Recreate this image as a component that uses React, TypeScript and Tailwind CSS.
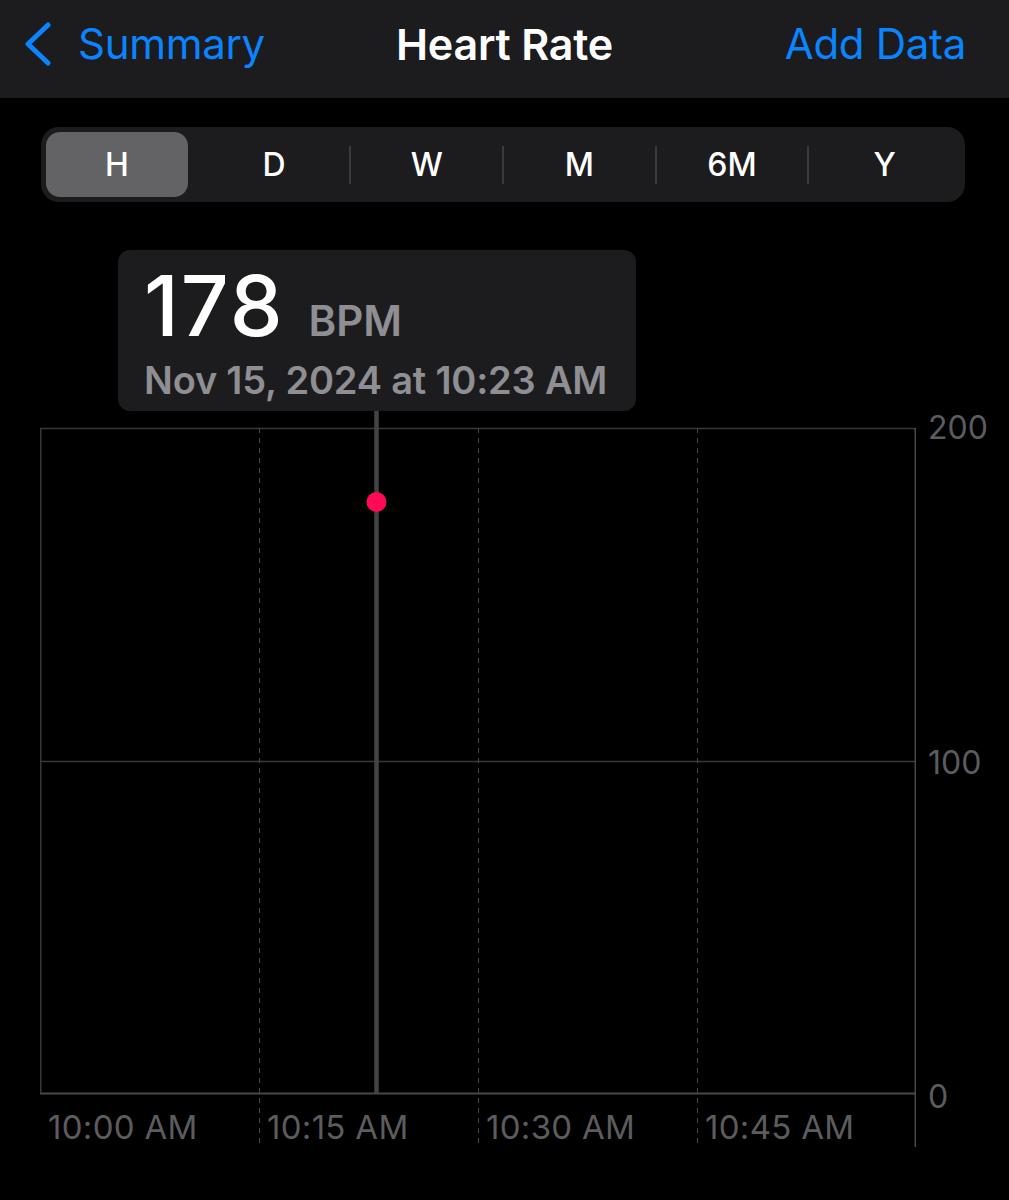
import React from "react";

const ranges = ["H", "D", "W", "M", "6M", "Y"];
const times = ["10:00 AM", "10:15 AM", "10:30 AM", "10:45 AM"];

function NavBar() {
  return (
    <div className="h-[98px] bg-[#1c1c1e] grid grid-cols-[1fr_auto_1fr] items-center pb-[10px] px-[22px]">
      <div className="flex items-center gap-[26px] text-[#0a84ff]">
        <svg width="30" height="44" viewBox="0 0 30 44" fill="none">
          <path d="M26 3 L6 22 L26 41" stroke="#0a84ff" strokeWidth="5" strokeLinecap="round" strokeLinejoin="round" />
        </svg>
        <span className="text-[42px] leading-none tracking-[-0.3px]">Summary</span>
      </div>
      <span className="text-[43px] leading-none font-semibold text-white tracking-[-0.2px]">Heart Rate</span>
      <span className="justify-self-end text-[42px] leading-none text-[#0a84ff] pr-[21px] tracking-[-0.3px]">Add Data</span>
    </div>
  );
}

function RangePicker() {
  return (
    <div className="mt-[29px] mx-[41px] w-[924px] h-[75px] rounded-[18px] bg-[#1c1c1e] p-[5px] flex items-center">
      {ranges.map((r, i) => (
        <React.Fragment key={r}>
          {i > 0 && (
            <div className={i === 1 ? "w-[2px] h-[38px]" : "w-[2px] h-[38px] bg-[#3a3a3c]"} />
          )}
          <div className="flex-1 h-full flex items-center">
            <div
              className={
                i === 0
                  ? "w-[142px] h-full rounded-[14px] bg-[#636366] flex items-center justify-center text-white text-[32px] font-medium"
                  : "w-full h-full flex items-center justify-center text-white text-[32px] font-medium"
              }
            >
              {r}
            </div>
          </div>
        </React.Fragment>
      ))}
    </div>
  );
}

function Tooltip() {
  return (
    <div className="mt-[48px] ml-[118px] w-[518px] h-[161px] rounded-[12px] bg-[#1c1c1e] px-[26px] pt-[14px]">
      <div className="flex items-baseline gap-[24px]">
        <span className="text-[84px] leading-[84px] font-medium text-white tracking-[2px]">178</span>
        <span className="text-[42px] leading-none font-semibold text-[#8e8e93]">BPM</span>
      </div>
      <div className="mt-[10px] text-[38px] leading-[44px] font-semibold text-[#8e8e93] tracking-[-0.2px]">
        Nov 15, 2024 at 10:23 AM
      </div>
    </div>
  );
}

function Chart() {
  const w = 876;
  const h = 740;
  const top = 17;
  const mid = 350;
  const bottom = 682;
  const grid = "#38383a";
  return (
    <div className="flex">
      <div className="relative ml-[40px] w-[876px] h-[740px]">
        <svg className="absolute inset-0" width={w} height={h} viewBox={`0 0 ${w} ${h}`}>
          <line x1="0" y1={top + 0.5} x2={w} y2={top + 0.5} stroke={grid} strokeWidth="1.5" />
          <line x1="0" y1={mid + 0.5} x2={w} y2={mid + 0.5} stroke={grid} strokeWidth="1.5" />
          <line x1="0" y1={bottom + 0.5} x2={w} y2={bottom + 0.5} stroke="#48484a" strokeWidth="2" />
          <line x1="0.75" y1={top} x2="0.75" y2={bottom} stroke={grid} strokeWidth="1.5" />
          <line x1={w - 0.75} y1={top} x2={w - 0.75} y2={736} stroke="#48484a" strokeWidth="1.5" />
          {[219, 438, 657].map((x) => (
            <line key={x} x1={x + 0.5} y1={top} x2={x + 0.5} y2={736} stroke="#48484a" strokeWidth="1" strokeDasharray="5 5" />
          ))}
          <line x1="336.5" y1="0" x2="336.5" y2={bottom} stroke="#434345" strokeWidth="4.5" />
          <circle cx="336.5" cy="91" r="10" fill="#ff0a55" />
        </svg>
        <div className="h-[696px]" />
        <div className="relative grid grid-cols-4 w-[876px]">
          {times.map((t) => (
            <span key={t} className="pl-[8px] text-[33px] leading-[40px] text-[#5c5c5e] tracking-[0.3px]">
              {t}
            </span>
          ))}
        </div>
      </div>
      <div className="-mt-[3px] h-[709px] pl-[12px] flex flex-col justify-between text-[32px] leading-[40px] text-[#5c5c5e]">
        <span>200</span>
        <span>100</span>
        <span>0</span>
      </div>
    </div>
  );
}

export default function App() {
  return (
    <div className="w-[1009px] h-[1200px] bg-black overflow-hidden font-[family-name:Inter,'Liberation_Sans',sans-serif]">
      <NavBar />
      <RangePicker />
      <Tooltip />
      <Chart />
    </div>
  );
}
